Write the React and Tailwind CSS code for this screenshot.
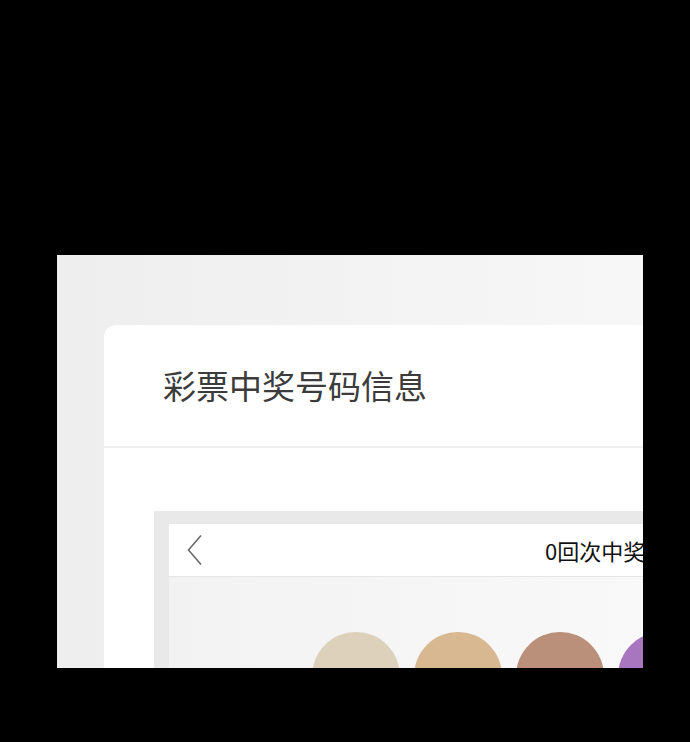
export default function App() {
  const balls = ['#ddd1bb', '#d8b890', '#bb907a', '#a876be']

  return (
    <div className="w-[690px] h-[742px] bg-black overflow-hidden font-['Noto_Sans_CJK_SC','Noto_Sans',sans-serif]">
      <div className="ml-[57px] mt-[255px] w-[586px] h-[413px] overflow-hidden bg-gradient-to-r from-[#eeeeee] to-[#f7f7f7] pl-[47px] pt-[70px]">
        {/* Card */}
        <div className="w-[620px] h-[400px] bg-white rounded-tl-xl">
          <div className="h-[121px] flex items-center pl-[59px]">
            <h1 className="text-[33px] leading-none text-[#3c3c3c]">彩票中奖号码信息</h1>
          </div>
          <div className="h-[2px] bg-[#efefef]" />

          <div className="pt-[63px] pl-[50px]">
            <div className="bg-[#e9e9e9] pl-[15px] pt-[13px] h-[200px]">
              <div className="h-[53px] bg-white border-b border-[#e6e6e6] flex items-center">
                <svg width="16" height="32" viewBox="0 0 16 32" className="ml-[18px]">
                  <path d="M14 1.5 L1.5 16 L14 30.5" fill="none" stroke="#6a6a6a" strokeWidth="1.6" />
                </svg>
                <span className="ml-[342px] text-[22px] leading-none text-[#111] whitespace-nowrap">0回次中奖号码</span>
              </div>
              <div className="h-[150px] bg-gradient-to-r from-[#f2f2f2] to-[#fafafa] pt-[55px] pl-[143px] flex gap-[14px]">
                {balls.map(c => (
                  <div key={c} className="w-[88px] h-[88px] shrink-0 rounded-full" style={{ background: c }} />
                ))}
              </div>
            </div>
          </div>
        </div>
      </div>
    </div>
  )
}
